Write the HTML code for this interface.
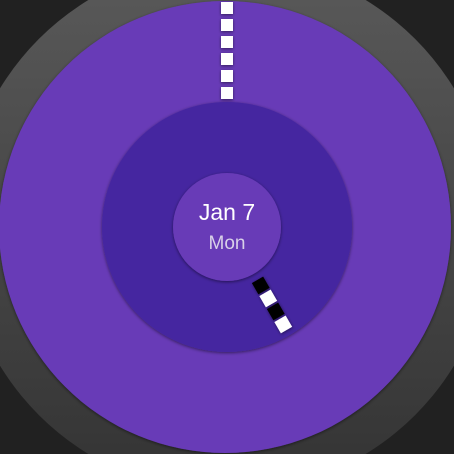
<!DOCTYPE html>
<html><head><style>
html,body{margin:0;padding:0;background:#212121;width:454px;height:454px;overflow:hidden}
svg{display:block}
</style></head><body>
<svg width="454" height="454" viewBox="0 0 454 454" style="position:absolute;left:0;top:0">
<defs>
<linearGradient id="g" x1="0" y1="0" x2="0" y2="1">
<stop offset="0" stop-color="#5a5a5a"/><stop offset="1" stop-color="#333"/>
</linearGradient>
<filter id="s" x="-20%" y="-20%" width="140%" height="140%"><feDropShadow dx="0" dy="1" stdDeviation="1.5" flood-color="#000" flood-opacity="0.5"/></filter>
</defs>
<rect width="454" height="454" fill="#212121"/>
<circle cx="227" cy="227" r="266" fill="url(#g)"/>
<circle cx="225" cy="227" r="226" fill="#673AB7" filter="url(#s)"/>
<g fill="#fff" filter="url(#s)">
<rect x="221" y="2" width="12" height="12"/>
<rect x="221" y="19" width="12" height="12"/>
<rect x="221" y="36" width="12" height="12"/>
<rect x="221" y="53" width="12" height="12"/>
<rect x="221" y="70" width="12" height="12"/>
<rect x="221" y="87" width="12" height="12"/>
</g>
<circle cx="227" cy="227" r="125" fill="#4527A0" filter="url(#s)"/>
<g transform="rotate(-30 227 227)" filter="url(#s)">
<rect x="220.5" y="288" width="13" height="13" fill="#000"/>
<rect x="220.5" y="303" width="13" height="13" fill="#fff"/>
<rect x="220.5" y="318" width="13" height="13" fill="#000"/>
<rect x="220.5" y="333" width="13" height="13" fill="#fff"/>
</g>
<circle cx="227" cy="227" r="54" fill="#673AB7" filter="url(#s)"/>
<text x="227" y="220" text-anchor="middle" font-family="Liberation Sans Narrow, Liberation Sans, sans-serif" font-size="23" fill="#fff">Jan 7</text>
<text x="227" y="249" text-anchor="middle" font-family="Liberation Sans Narrow, Liberation Sans, sans-serif" font-size="19" fill="#d8d0e8">Mon</text>
</svg>
</body></html>
